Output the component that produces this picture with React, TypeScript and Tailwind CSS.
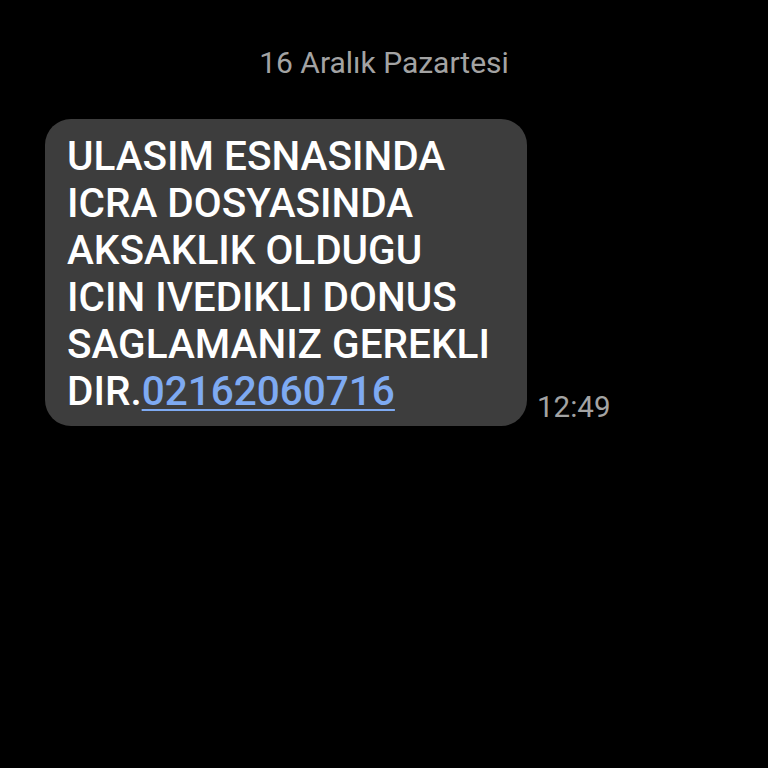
export default function App() {
  return (
    <div className="w-[768px] h-[768px] bg-black overflow-hidden" style={{ fontFamily: 'Roboto, "Noto Sans", sans-serif' }}>
      {/* Date header */}
      <div className="pt-[43px] text-center text-[30px] leading-[40px] text-[#a3a3a3]">16 Aralık Pazartesi</div>

      {/* Message row */}
      <div className="mt-[36px] flex items-end pl-[45px]">
        <div className="w-[482px] h-[307px] rounded-[26px] bg-[#3d3d3d] pl-[22px] pt-[14px] text-[40.5px] font-medium leading-[47px] text-white">
          ULASIM ESNASINDA
          <br />
          ICRA DOSYASINDA
          <br />
          AKSAKLIK OLDUGU
          <br />
          ICIN IVEDIKLI DONUS
          <br />
          SAGLAMANIZ GEREKLI
          <br />
          DIR.<span className="text-[#7eaaf2] underline decoration-2 underline-offset-4">02162060716</span>
        </div>
        <div className="ml-[10px] mb-[2px] text-[29.5px] leading-[34px] text-[#a3a3a3]">12:49</div>
      </div>
    </div>
  )
}
